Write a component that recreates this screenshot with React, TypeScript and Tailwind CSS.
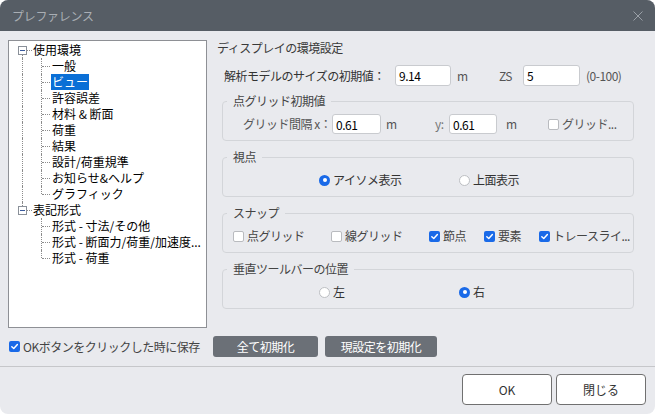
import React from "react";

const FONT = { fontFamily: '"Noto Sans CJK JP", "Noto Sans", sans-serif' };

function Check({ checked }: { checked?: boolean }) {
  if (checked) {
    return (
      <span className="inline-flex w-[11px] h-[11px] shrink-0 items-center justify-center rounded-[2px] bg-[#1a6ae8]">
        <svg width="9" height="9" viewBox="0 0 10 10">
          <path d="M2 5.2 L4.2 7.3 L8.2 2.8" fill="none" stroke="#fff" strokeWidth="1.6" strokeLinecap="round" strokeLinejoin="round" />
        </svg>
      </span>
    );
  }
  return <span className="inline-block w-[11px] h-[11px] shrink-0 rounded-[2px] border border-[#b9bbbf] bg-white" />;
}

function Radio({ checked }: { checked?: boolean }) {
  if (checked) {
    return (
      <span className="inline-flex w-[11px] h-[11px] shrink-0 items-center justify-center rounded-full bg-[#1a6ae8]">
        <span className="w-[4px] h-[4px] rounded-full bg-white" />
      </span>
    );
  }
  return <span className="inline-block w-[11px] h-[11px] shrink-0 rounded-full border border-[#bdbfc3] bg-white" />;
}

function Field({ value, w, h }: { value: string; w: string; h: string }) {
  return (
    <input
      readOnly
      value={value}
      className={`${w} ${h} shrink-0 rounded-[3px] border border-[#c9cbcf] bg-white pl-[3px] text-[12px] text-black outline-none`}
      style={FONT}
    />
  );
}

type TreeRow = { label: string; kind: "root" | "child"; lastChild?: boolean; parentLast?: boolean; selected?: boolean; rootLast?: boolean };

const rows: TreeRow[] = [
  { label: "使用環境", kind: "root" },
  { label: "一般", kind: "child" },
  { label: "ビュー", kind: "child", selected: true },
  { label: "許容誤差", kind: "child" },
  { label: "材料 & 断面", kind: "child" },
  { label: "荷重", kind: "child" },
  { label: "結果", kind: "child" },
  { label: "設計/荷重規準", kind: "child" },
  { label: "お知らせ&ヘルプ", kind: "child" },
  { label: "グラフィック", kind: "child", lastChild: true },
  { label: "表記形式", kind: "root", rootLast: true },
  { label: "形式 - 寸法/その他", kind: "child", parentLast: true },
  { label: "形式 - 断面力/荷重/加速度...", kind: "child", parentLast: true },
  { label: "形式 - 荷重", kind: "child", parentLast: true, lastChild: true },
];

const dot = "border-[#8c8c8c] border-dotted";

function Tree() {
  return (
    <div className="w-[199px] h-[288px] shrink-0 border border-[#8e9095] bg-white pt-[1px] overflow-hidden">
      {rows.map((r, i) => (
        <div key={i} className="relative h-[16px] flex items-center text-[12px] text-black leading-[16px] whitespace-nowrap">
          {r.kind === "root" ? (
            <>
              <span className="absolute left-[9px] top-[4px] w-[9px] h-[9px] border border-[#8a9099] bg-white flex items-center justify-center">
                <span className="w-[5px] h-[1px] bg-[#3a5a9c]" />
              </span>
              <span className={`absolute left-[18px] top-[8px] w-[5px] border-t ${dot}`} />
              {i > 0 && <span className={`absolute left-[13px] top-0 h-[4px] border-l ${dot}`} />}
              {!r.rootLast && <span className={`absolute left-[13px] top-[13px] h-[3px] border-l ${dot}`} />}
              <span className="pl-[24px]">{r.label}</span>
            </>
          ) : (
            <>
              {!r.parentLast && <span className={`absolute left-[13px] top-0 h-[16px] border-l ${dot}`} />}
              <span className={`absolute left-[32px] top-0 ${r.lastChild ? "h-[8px]" : "h-[16px]"} border-l ${dot}`} />
              <span className={`absolute left-[33px] top-[8px] w-[8px] border-t ${dot}`} />
              <span className={`ml-[42px] px-[1px] ${r.selected ? "bg-[#0a6fd6] text-white" : ""}`}>{r.label}</span>
            </>
          )}
        </div>
      ))}
    </div>
  );
}

function Group({ title, children, className }: { title: string; children: React.ReactNode; className?: string }) {
  return (
    <fieldset className={`ml-[5px] w-[412px] rounded-[4px] border border-[#d3d5d9] ${className ?? ""}`}>
      <legend className="ml-[4px] px-[6px] h-[16px] leading-[16px] text-[12px] text-[#444] tracking-[-0.5px]">{title}</legend>
      {children}
    </fieldset>
  );
}

export default function App() {
  return (
    <div className="w-[655px] h-[414px] bg-white" style={FONT}>
      <div className="w-full h-full rounded-[8px] overflow-hidden bg-[#e9eaee] flex flex-col">
        {/* Title bar */}
        <div className="h-[31px] shrink-0 bg-[#565d65] flex items-center justify-between pl-[12px] pr-[12px]">
          <span className="text-[12px] text-[#a9aeb4] tracking-[-0.3px]">プレファレンス</span>
          <svg width="10" height="10" viewBox="0 0 10 10">
            <path d="M0.5 0.5 L9.5 9.5 M9.5 0.5 L0.5 9.5" stroke="#9aa0a7" strokeWidth="1" />
          </svg>
        </div>

        {/* Main */}
        <div className="flex pt-[9px] pl-[8px]">
          <Tree />
          <div className="ml-[10px] flex flex-col text-[12px] text-[#333] tracking-[-0.5px]">
            <div className="h-[16px] leading-[16px] text-[#3a3a3a]">ディスプレイの環境設定</div>

            <div className="mt-[9px] h-[21px] flex items-center">
              <span className="w-[178px] pl-[7px] shrink-0">解析モデルのサイズの初期値：</span>
              <Field value="9.14" w="w-[56px]" h="h-[21px]" />
              <span className="ml-[6px] w-[42px] text-[#555]">m</span>
              <span className="w-[24px] text-[#555]">ZS</span>
              <Field value="5" w="w-[57px]" h="h-[21px]" />
              <span className="ml-[6px] text-[#555]">(0-100)</span>
            </div>

            <Group title="点グリッド初期値" className="mt-[7px] pt-[5px] pb-[6px]">
              <div className="h-[20px] flex items-center pl-[20px]">
                <span className="w-[89px] shrink-0 text-[#555]">グリッド間隔 x：</span>
                <Field value="0.61" w="w-[49px]" h="h-[20px]" />
                <span className="ml-[5px] w-[49px] text-[#555]">m</span>
                <span className="w-[14px] text-[#777]">y:</span>
                <Field value="0.61" w="w-[48px]" h="h-[20px]" />
                <span className="ml-[9px] w-[42px] text-[#555]">m</span>
                <Check />
                <span className="ml-[3px] text-[#555]">グリッド...</span>
              </div>
            </Group>

            <Group title="視点" className="mt-[8px] pt-[7px] pb-[8px]">
              <div className="h-[16px] flex items-center pl-[96px]">
                <span className="w-[140px] flex items-center gap-[3px]">
                  <Radio checked />
                  <span>アイソメ表示</span>
                </span>
                <span className="flex items-center gap-[3px]">
                  <Radio />
                  <span>上面表示</span>
                </span>
              </div>
            </Group>

            <Group title="スナップ" className="mt-[8px] pt-[7px] pb-[8px]">
              <div className="h-[16px] flex items-center pl-[10px] text-[#444]">
                <span className="w-[98px] flex items-center gap-[3px]"><Check /><span>点グリッド</span></span>
                <span className="w-[98px] flex items-center gap-[3px]"><Check /><span>線グリッド</span></span>
                <span className="w-[55px] flex items-center gap-[3px]"><Check checked /><span>節点</span></span>
                <span className="w-[55px] flex items-center gap-[3px]"><Check checked /><span>要素</span></span>
                <span className="flex items-center gap-[3px]"><Check checked /><span>トレースライ...</span></span>
              </div>
            </Group>

            <Group title="垂直ツールバーの位置" className="mt-[8px] pt-[7px] pb-[8px]">
              <div className="h-[16px] flex items-center pl-[96px]">
                <span className="w-[140px] flex items-center gap-[3px]">
                  <Radio />
                  <span>左</span>
                </span>
                <span className="flex items-center gap-[3px]">
                  <Radio checked />
                  <span>右</span>
                </span>
              </div>
            </Group>
          </div>
        </div>

        {/* Bottom controls */}
        <div className="mt-[8px] h-[21px] flex items-center pl-[9px] text-[12px] tracking-[-0.5px]">
          <span className="w-[204px] flex items-center gap-[3px]">
            <Check checked />
            <span className="text-[#444]">OKボタンをクリックした時に保存</span>
          </span>
          <button className="w-[105px] h-[21px] rounded-[3px] bg-[#6b7077] text-white text-[12px]" style={FONT}>全て初期化</button>
          <button className="ml-[7px] w-[112px] h-[21px] rounded-[3px] bg-[#6b7077] text-white text-[12px]" style={FONT}>現設定を初期化</button>
        </div>

        <div className="mt-[9px] border-t border-[#c6c7ca]" />

        <div className="mt-[7px] flex justify-end gap-[4px] pr-[9px]">
          <button className="w-[90px] h-[31px] rounded-[4px] border border-[#707070] bg-white text-[12px] text-[#333]" style={FONT}>OK</button>
          <button className="w-[90px] h-[31px] rounded-[4px] border border-[#707070] bg-white text-[12px] text-[#333]" style={FONT}>閉じる</button>
        </div>
      </div>
    </div>
  );
}
